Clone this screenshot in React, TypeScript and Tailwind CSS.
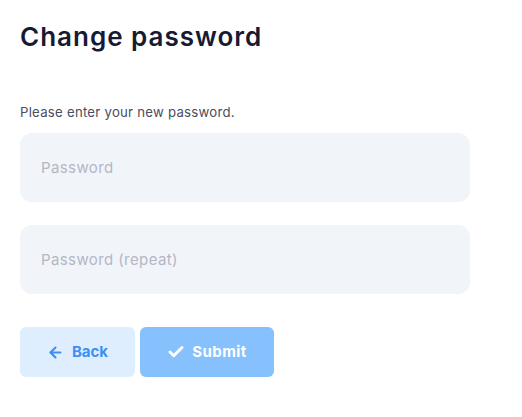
import React from 'react';
import { ArrowLeft, Check } from 'lucide-react';

export default function App() {
  return (
    <div className="min-h-screen bg-white px-5 pt-[18px] font-['Inter',sans-serif]">
      <h1 className="text-[26px] font-semibold leading-[38px] tracking-[1px] text-[#171a33]">
        Change password
      </h1>

      <p className="mt-[47px] text-[13.2px] leading-[18px] tracking-[0.25px] text-[#4a4d5e]">
        Please enter your new password.
      </p>

      <form className="mt-[12px] flex w-[450px] flex-col gap-[23px]">
        <input
          type="password"
          placeholder="Password"
          className="h-[69px] w-full rounded-[12px] bg-[#f1f4f8] pl-[21px] pr-5 text-[15px] tracking-[0.4px] text-[#171a33] outline-none placeholder:text-[#b3b7c6]"
        />
        <input
          type="password"
          placeholder="Password (repeat)"
          className="h-[69px] w-full rounded-[12px] bg-[#f1f4f8] pl-[21px] pr-5 text-[15px] tracking-[0.4px] text-[#171a33] outline-none placeholder:text-[#b3b7c6]"
        />

        <div className="mt-[10px] flex gap-[5px]">
          <button
            type="button"
            className="flex h-[50px] w-[115px] items-center justify-center gap-[8px] rounded-[6px] bg-[#dfeefe] text-[15px] font-bold text-[#3d8ef5]"
          >
            <ArrowLeft size={17} strokeWidth={3} />
            Back
          </button>
          <button
            type="button"
            className="flex h-[50px] w-[134px] items-center justify-center gap-[7px] rounded-[6px] bg-[#86c1fd] text-[15px] font-bold tracking-[0.4px] text-white"
          >
            <Check size={18} strokeWidth={4} />
            Submit
          </button>
        </div>
      </form>
    </div>
  );
}
